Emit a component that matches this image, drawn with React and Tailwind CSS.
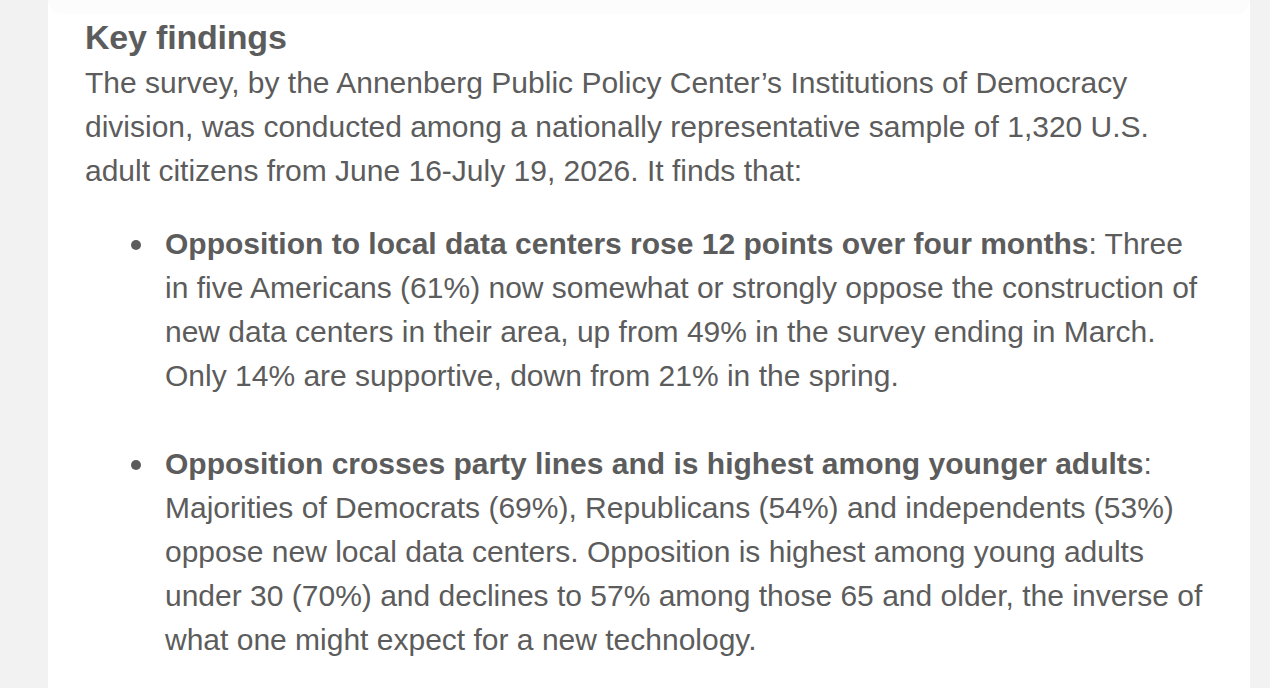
function Item({ title, children }) {
  return (
    <li className="flex">
      <div className="w-[80px] shrink-0 pl-[46px] pt-[18px]">
        <div className="h-[10px] w-[10px] rounded-full bg-[#5c5c5c]" />
      </div>
      <div>
        <strong className="font-bold">{title}</strong>
        {children}
      </div>
    </li>
  );
}

export default function App() {
  return (
    <div className="min-h-[688px] bg-[#f2f2f2] pl-[48px] pr-[20px] font-['Liberation_Sans',Arial,sans-serif] text-[#5c5c5c]">
      <div className="relative min-h-[688px] bg-white pl-[37px] pr-[39px] pt-[17px]">
        <div className="absolute left-0 right-0 top-0 h-[14px] rounded-b-[60px] bg-[#fcfcfc]" />
        <h2 className="relative text-[34px] font-bold leading-[40px] tracking-[-0.2px] mb-[4px]">Key findings</h2>
        <p className="text-[30px] leading-[44px]">
          The survey, by the Annenberg Public Policy Center’s Institutions of Democracy division, was conducted among a nationally representative sample of 1,320 U.S. adult citizens from June 16-July 19, 2026. It finds that:
        </p>
        <ul className="mt-[29px] text-[30px] leading-[44px] space-y-[44px]">
          <Item title="Opposition to local data centers rose 12 points over four months">
            : Three in five Americans (61%) now somewhat or strongly oppose the construction of new data centers in their area, up from 49% in the survey ending in March. Only 14% are supportive, down from 21% in the spring.
          </Item>
          <Item title="Opposition crosses party lines and is highest among younger adults">
            : Majorities of Democrats (69%), Republicans (54%) and independents (53%) oppose new local data centers. Opposition is highest among young adults under 30 (70%) and declines to 57% among those 65 and older, the inverse of what one might expect for a new technology.
          </Item>
        </ul>
      </div>
    </div>
  );
}
